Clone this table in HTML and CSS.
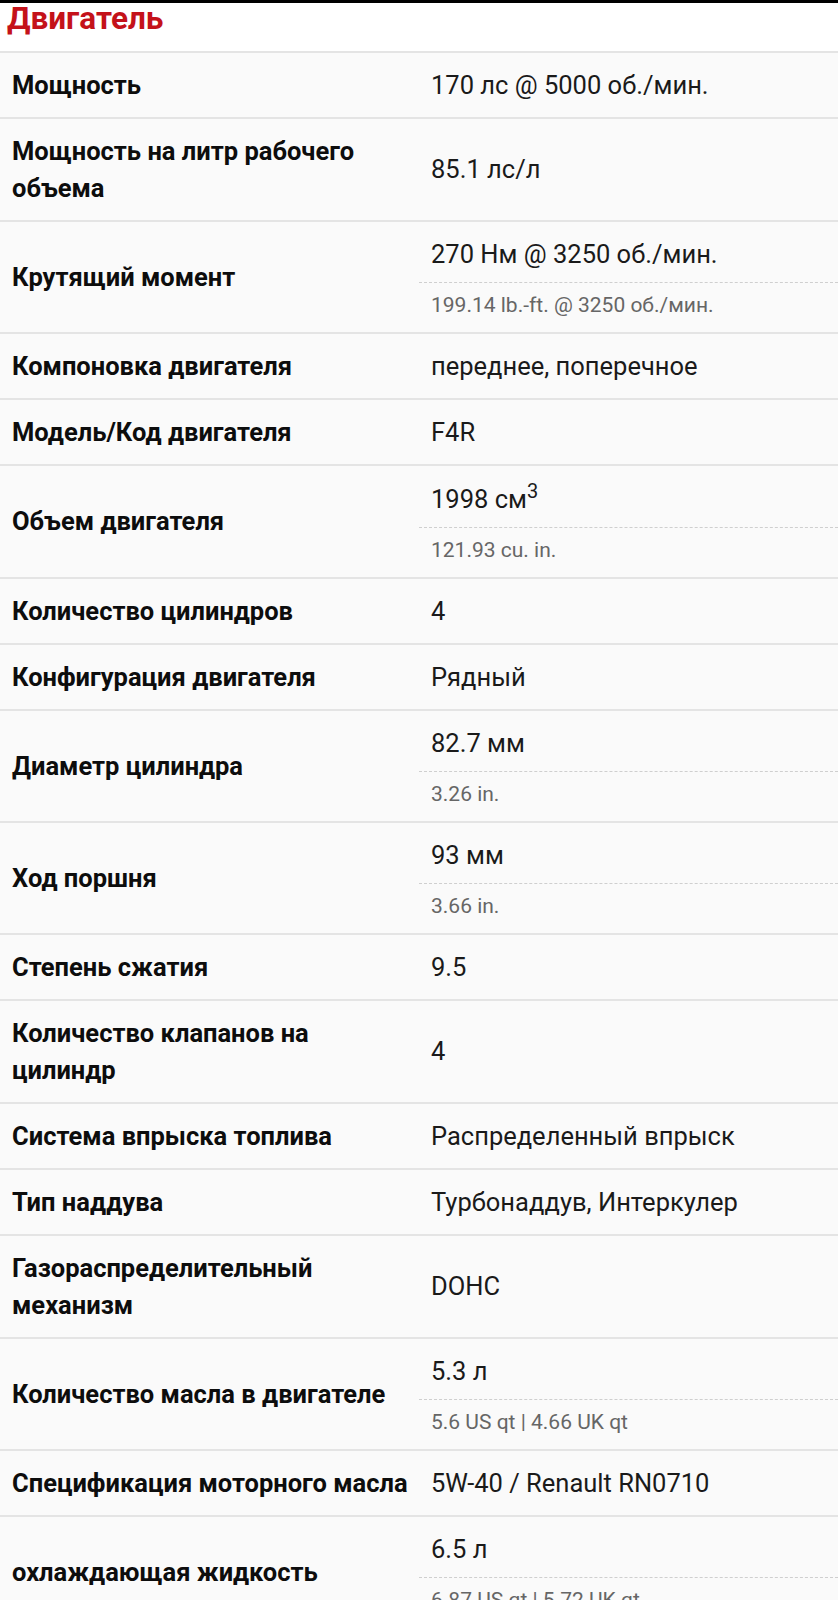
FILE: index.html
```html
<!DOCTYPE html>
<html lang="ru">
<head>
<meta charset="utf-8">
<title>Двигатель</title>
<link rel="stylesheet" href="styles.css">
</head>
<body>
<div class="topbar"></div>
<section class="specs">
  <h2 class="title">Двигатель</h2>
  <div class="row"><div class="label">Мощность</div><div class="value"><div class="main">170 лс @ 5000 об./мин.</div></div></div>
  <div class="row"><div class="label">Мощность на литр рабочего объема</div><div class="value"><div class="main">85.1 лс/л</div></div></div>
  <div class="row"><div class="label">Крутящий момент</div><div class="value"><div class="main dashed">270 Нм @ 3250 об./мин.</div><div class="sub">199.14 lb.-ft. @ 3250 об./мин.</div></div></div>
  <div class="row"><div class="label">Компоновка двигателя</div><div class="value"><div class="main">переднее, поперечное</div></div></div>
  <div class="row"><div class="label">Модель/Код двигателя</div><div class="value"><div class="main">F4R</div></div></div>
  <div class="row"><div class="label">Объем двигателя</div><div class="value"><div class="main dashed">1998 см<sup>3</sup></div><div class="sub">121.93 cu. in.</div></div></div>
  <div class="row"><div class="label">Количество цилиндров</div><div class="value"><div class="main">4</div></div></div>
  <div class="row"><div class="label">Конфигурация двигателя</div><div class="value"><div class="main">Рядный</div></div></div>
  <div class="row"><div class="label">Диаметр цилиндра</div><div class="value"><div class="main dashed">82.7 мм</div><div class="sub">3.26 in.</div></div></div>
  <div class="row"><div class="label">Ход поршня</div><div class="value"><div class="main dashed">93 мм</div><div class="sub">3.66 in.</div></div></div>
  <div class="row"><div class="label">Степень сжатия</div><div class="value"><div class="main">9.5</div></div></div>
  <div class="row"><div class="label">Количество клапанов на цилиндр</div><div class="value"><div class="main">4</div></div></div>
  <div class="row"><div class="label">Система впрыска топлива</div><div class="value"><div class="main">Распределенный впрыск</div></div></div>
  <div class="row"><div class="label">Тип наддува</div><div class="value"><div class="main">Турбонаддув, Интеркулер</div></div></div>
  <div class="row"><div class="label">Газораспределительный механизм</div><div class="value"><div class="main">DOHC</div></div></div>
  <div class="row"><div class="label">Количество масла в двигателе</div><div class="value"><div class="main dashed">5.3 л</div><div class="sub">5.6 US qt | 4.66 UK qt</div></div></div>
  <div class="row"><div class="label">Спецификация моторного масла</div><div class="value"><div class="main">5W-40 / Renault RN0710</div></div></div>
  <div class="row"><div class="label">охлаждающая жидкость</div><div class="value"><div class="main dashed">6.5 л</div><div class="sub">6.87 US qt | 5.72 UK qt</div></div></div>
</section>
</body>
</html>
```

FILE: styles.css
```css
html, body {
  margin: 0;
  padding: 0;
  background: #fafafa;
}
body {
  font-family: Roboto, "Noto Sans", sans-serif;
  color: #111;
}
.topbar {
  position: fixed;
  top: 0;
  left: 0;
  right: 0;
  height: 3px;
  background: #000;
  z-index: 2;
}
.specs {
  display: flex;
  flex-direction: column;
}
.title {
  margin: 0;
  padding: 0 7px 14px;
  background: #fff;
  color: #c4121a;
  font-size: 31.5px;
  font-weight: 700;
  line-height: 37px;
  border-bottom: 2px solid #e4e4e4;
}
.row {
  display: grid;
  grid-template-columns: 419px 1fr;
  border-bottom: 2px solid #e4e4e4;
  background: #fafafa;
}
.label {
  display: flex;
  align-items: center;
  padding: 13.5px 6px 13.5px 12px;
  font-size: 25.5px;
  font-weight: 700;
  line-height: 37px;
  color: #0d0d0d;
}
.value {
  display: flex;
  flex-direction: column;
  justify-content: center;
}
.main {
  padding: 13.5px 12px;
  font-size: 25.5px;
  line-height: 37px;
  color: #1a1a1a;
}
.main.dashed {
  padding-top: 14px;
  padding-bottom: 9px;
  border-bottom: 1.5px dashed #cfcfcf;
}
.main sup {
  font-size: 20px;
  line-height: 22px;
  vertical-align: 10px;
}
.sub {
  padding: 7px 12px 12px;
  font-size: 21px;
  line-height: 30px;
  color: #666;
}
```
